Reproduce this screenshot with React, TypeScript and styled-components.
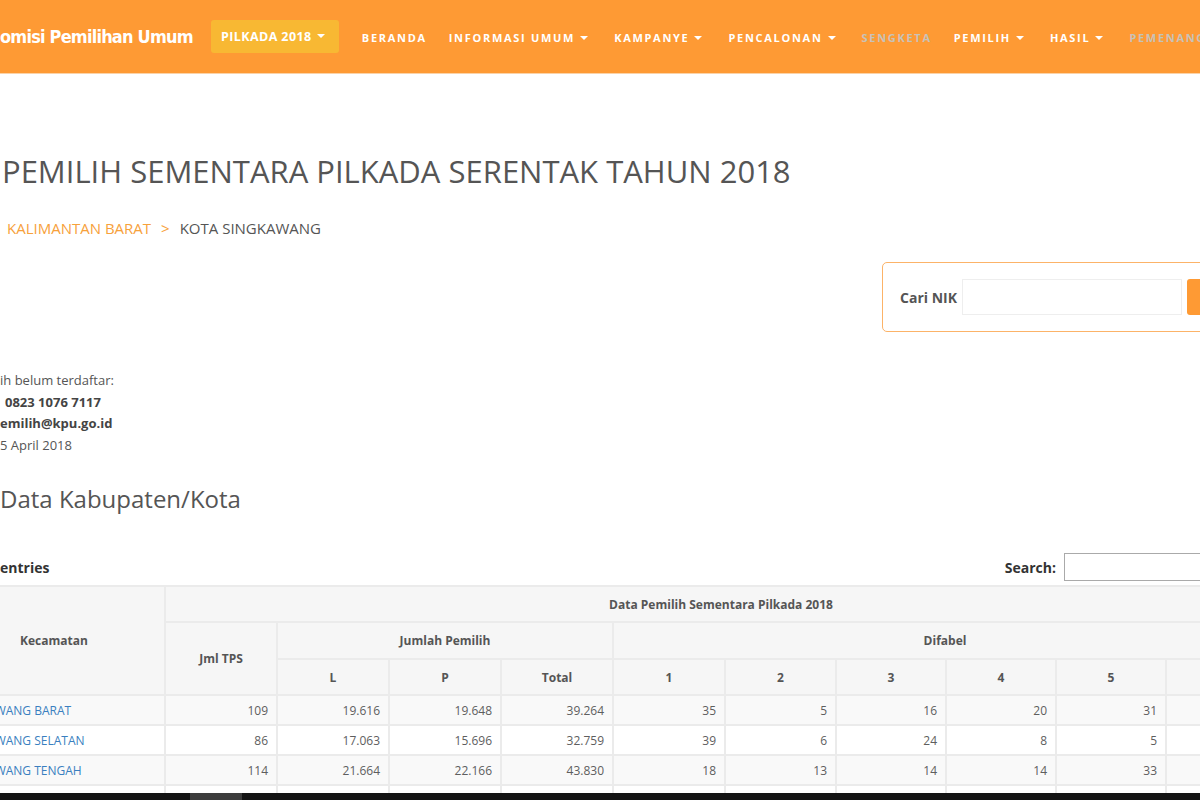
import React from "react";
import styled, { createGlobalStyle } from "styled-components";

const GlobalStyle = createGlobalStyle`
  html, body {
    margin: 0;
    padding: 0;
    overflow: hidden;
    background: #ffffff;
    font-family: "Open Sans", "Noto Sans", sans-serif;
    color: #555555;
  }
`;

const Page = styled("div")`
  width: 1200px;
  height: 800px;
  overflow: hidden;
`;

const Header = styled("header")`
  height: 73px;
  background-color: #fe9a34;
  border-bottom: 1px solid #fbd3a8;
  display: flex;
  align-items: center;
  white-space: nowrap;
  overflow: hidden;
`;

const Logo = styled("div")`
  flex-shrink: 0;
  font-family: "DejaVu Sans Condensed", "DejaVu Sans", sans-serif;
  font-stretch: condensed;
  font-weight: 700;
  font-size: 18px;
  letter-spacing: -0.8px;
  color: #ffffff;
  margin-right: 18px;
  margin-top: -1px;
`;

const PilkadaButton = styled("button")`
  flex-shrink: 0;
  width: 128px;
  height: 33px;
  border: none;
  border-radius: 3px;
  background-color: #f8b833;
  color: #ffffff;
  font-family: "Open Sans", sans-serif;
  font-weight: 700;
  font-size: 12.5px;
  letter-spacing: 0.4px;
  display: flex;
  align-items: center;
  justify-content: center;
  gap: 3px;
  margin-top: -1px;
  margin-right: 23px;
`;

const Nav = styled("nav")`
  flex-shrink: 0;
  display: flex;
  align-items: center;
  gap: 22px;
  margin-top: 2px;
`;

const NavItem = styled("span")<{ muted?: boolean }>`
  flex-shrink: 0;
  font-weight: 700;
  font-size: 11px;
  letter-spacing: 1.7px;
  color: ${(props) => (props.muted ? "#c8c2b8" : "#ffffff")};
  display: flex;
  align-items: center;
  gap: 3px;
`;

const Caret = styled("span")`
  display: inline-block;
  width: 0;
  height: 0;
  border-left: 4px solid transparent;
  border-right: 4px solid transparent;
  border-top: 4px solid currentColor;
  margin-left: 2px;
  margin-right: 4px;
`;

const Content = styled("main")`
  padding-top: 77px;
`;

const Title = styled("h1")`
  margin: 0;
  padding-left: 2px;
  font-weight: 400;
  font-size: 31px;
  line-height: 40px;
  color: #555555;
  white-space: nowrap;
`;

const Breadcrumb = styled("div")`
  margin-top: 27px;
  padding-left: 7px;
  font-size: 15px;
  display: flex;
  gap: 10px;
  white-space: nowrap;
`;

const Crumb = styled("span")<{ active?: boolean }>`
  color: ${(props) => (props.active ? "#555555" : "#f7a13b")};
`;

const NikRow = styled("div")`
  display: grid;
  grid-template-columns: 882px 400px;
  margin-top: 24px;
`;

const NikBox = styled("div")`
  height: 68px;
  border: 1px solid #fcb368;
  border-radius: 5px;
  display: flex;
  align-items: center;
  padding-left: 17px;
  gap: 5px;
`;

const NikLabel = styled("label")`
  font-weight: 700;
  font-size: 14px;
  color: #555555;
`;

const NikInput = styled("input")`
  flex-shrink: 0;
  width: 220px;
  height: 36px;
  box-sizing: border-box;
  border: 1px solid #eeeeee;
`;

const NikButton = styled("button")`
  flex-shrink: 0;
  width: 40px;
  height: 36px;
  border: none;
  border-radius: 3px 0 0 3px;
  background: #fe9a34;
`;

const Contact = styled("div")`
  margin-top: 38px;
  font-size: 13px;
  line-height: 21.6px;
  color: #555555;
  white-space: nowrap;
`;

const ContactLine = styled("div")<{ strong?: boolean; indent?: number }>`
  font-weight: ${(props) => (props.strong ? 700 : 400)};
  color: ${(props) => (props.strong ? "#444444" : "#555555")};
  padding-left: ${(props) => props.indent || 0}px;
`;

const SectionTitle = styled("h2")`
  margin: 28px 0 0 0;
  font-weight: 400;
  font-size: 24px;
  line-height: 30px;
  color: #555555;
  white-space: nowrap;
`;

const TableControls = styled("div")`
  display: flex;
  justify-content: space-between;
  align-items: center;
  margin-top: 38px;
  height: 30px;
`;

const ControlText = styled("span")`
  font-weight: 700;
  font-size: 14px;
  color: #333333;
`;

const SearchField = styled("label")`
  display: flex;
  align-items: center;
  gap: 8px;
  font-weight: 700;
  font-size: 14px;
  color: #333333;
  margin-right: -100px;
`;

const SearchInput = styled("input")`
  width: 236px;
  height: 28px;
  box-sizing: border-box;
  border: 1px solid #aaaaaa;
`;

const Table = styled("table")`
  margin-top: 3px;
  margin-left: -58px;
  width: 1334px;
  border-collapse: collapse;
  table-layout: fixed;
  font-size: 12px;
  color: #5e5e5e;
`;

const HeadCell = styled("th")<{ h?: number }>`
  background: #f6f6f6;
  border: 2px solid #ebebeb;
  font-size: 12px;
  font-weight: 700;
  color: #555555;
  text-align: center;
  height: ${(props) => props.h || 33}px;
  padding: 0;
  white-space: nowrap;
`;

const BodyRow = styled("tr")<{ odd?: boolean }>`
  background: ${(props) => (props.odd ? "#f9f9f9" : "#ffffff")};
`;

const Cell = styled("td")`
  border: 2px solid #ebebeb;
  height: 28px;
  padding: 0 8px;
  text-align: right;
  white-space: nowrap;
  overflow: hidden;
`;

const NameCell = styled(Cell)`
  text-align: left;
  color: #3a7fc0;
`;

const PlayerBar = styled("div")`
  position: fixed;
  left: 0;
  bottom: 0;
  width: 1200px;
  height: 7px;
  background: #141414;
  display: flex;
`;

const PlayerThumb = styled("div")`
  margin-left: 190px;
  width: 52px;
  height: 7px;
  background: #3c3c3c;
`;

const navItems = [
  { label: "BERANDA" },
  { label: "INFORMASI UMUM", caret: true },
  { label: "KAMPANYE", caret: true },
  { label: "PENCALONAN", caret: true },
  { label: "SENGKETA", muted: true },
  { label: "PEMILIH", caret: true },
  { label: "HASIL", caret: true },
  { label: "PEMENANG", muted: true },
];

const colWidths = [222, 112, 112, 112, 112, 112, 111, 110, 110, 110, 111];

const rows = [
  ["SINGKAWANG BARAT", "109", "19.616", "19.648", "39.264", "35", "5", "16", "20", "31", "12"],
  ["SINGKAWANG SELATAN", "86", "17.063", "15.696", "32.759", "39", "6", "24", "8", "5", "9"],
  ["SINGKAWANG TENGAH", "114", "21.664", "22.166", "43.830", "18", "13", "14", "14", "33", "10"],
  ["SINGKAWANG TIMUR", "72", "13.211", "12.874", "26.085", "21", "4", "9", "11", "17", "6"],
];

export default function App() {
  return (
    <Page>
      <GlobalStyle />
      <Header>
        <Logo>omisi Pemilihan Umum</Logo>
        <PilkadaButton>
          PILKADA 2018 <Caret />
        </PilkadaButton>
        <Nav>
          {navItems.map((item) => (
            <NavItem key={item.label} muted={item.muted}>
              {item.label}
              {item.caret && <Caret />}
            </NavItem>
          ))}
        </Nav>
      </Header>

      <Content>
        <Title>PEMILIH SEMENTARA PILKADA SERENTAK TAHUN 2018</Title>
        <Breadcrumb>
          <Crumb>KALIMANTAN BARAT</Crumb>
          <Crumb>&gt;</Crumb>
          <Crumb active>KOTA SINGKAWANG</Crumb>
        </Breadcrumb>

        <NikRow>
          <div />
          <NikBox>
            <NikLabel>Cari NIK</NikLabel>
            <NikInput />
            <NikButton />
          </NikBox>
        </NikRow>

        <Contact>
          <ContactLine>ih belum terdaftar:</ContactLine>
          <ContactLine strong indent={5}>
            0823 1076 7117
          </ContactLine>
          <ContactLine strong>emilih@kpu.go.id</ContactLine>
          <ContactLine>5 April 2018</ContactLine>
        </Contact>

        <SectionTitle>Data Kabupaten/Kota</SectionTitle>

        <TableControls>
          <ControlText>entries</ControlText>
          <SearchField>
            Search:
            <SearchInput />
          </SearchField>
        </TableControls>

        <Table>
          <colgroup>
            {colWidths.map((w, i) => (
              <col key={i} style={{ width: w }} />
            ))}
          </colgroup>
          <thead>
            <tr>
              <HeadCell rowSpan={3}>Kecamatan</HeadCell>
              <HeadCell colSpan={10} h={34}>
                Data Pemilih Sementara Pilkada 2018
              </HeadCell>
            </tr>
            <tr>
              <HeadCell rowSpan={2}>Jml TPS</HeadCell>
              <HeadCell colSpan={3} h={35}>
                Jumlah Pemilih
              </HeadCell>
              <HeadCell colSpan={6} h={35}>
                Difabel
              </HeadCell>
            </tr>
            <tr>
              <HeadCell h={34}>L</HeadCell>
              <HeadCell h={34}>P</HeadCell>
              <HeadCell h={34}>Total</HeadCell>
              {[1, 2, 3, 4, 5, 6].map((n) => (
                <HeadCell key={n} h={34}>
                  {n}
                </HeadCell>
              ))}
            </tr>
          </thead>
          <tbody>
            {rows.map((row, i) => (
              <BodyRow key={row[0]} odd={i % 2 === 0}>
                <NameCell>{row[0]}</NameCell>
                {row.slice(1).map((v, j) => (
                  <Cell key={j}>{v}</Cell>
                ))}
              </BodyRow>
            ))}
          </tbody>
        </Table>
      </Content>

      <PlayerBar>
        <PlayerThumb />
      </PlayerBar>
    </Page>
  );
}
